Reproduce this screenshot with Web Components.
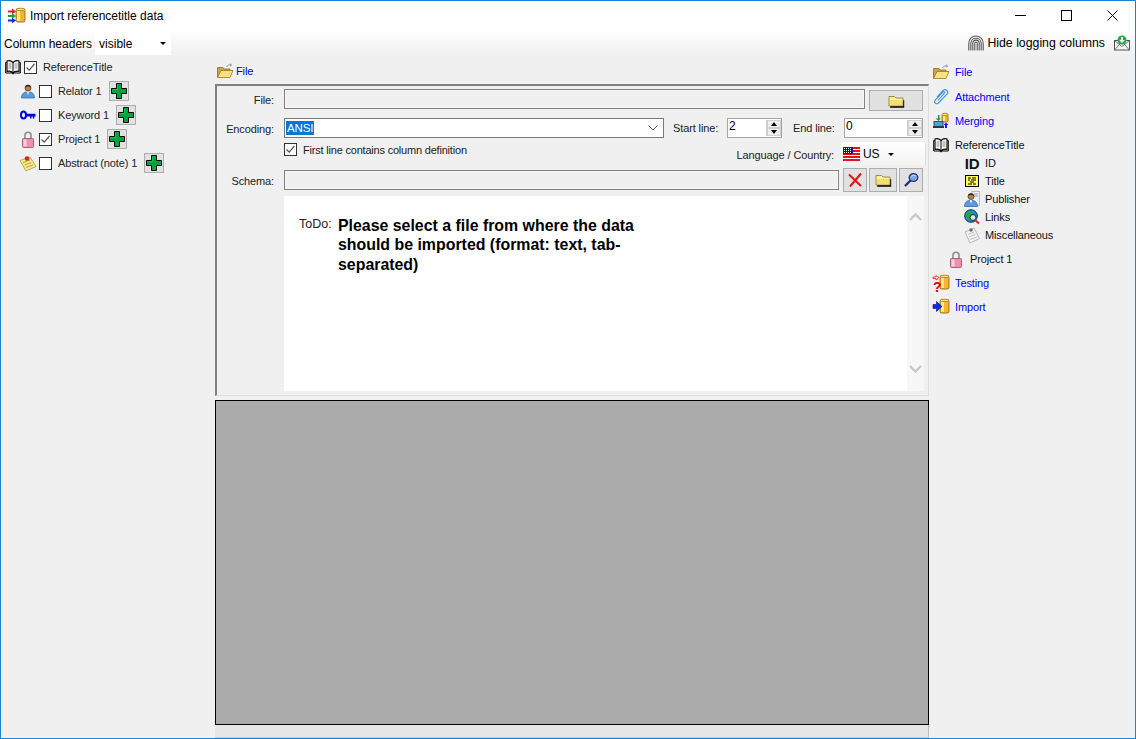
<!DOCTYPE html>
<html lang="en">
<head>
<meta charset="UTF-8">
<title>Import referencetitle data</title>
<style>
  html, body { margin: 0; height: 100%; overflow: hidden; }
  body { font: 12px "Liberation Sans", Arial, sans-serif; color: #000; background: #f0f0f0; }
</style>
</head>
<body>
<import-window>
  <span slot="title">Import referencetitle data</span>

  <tree-row slot="tree" icon="book" label="ReferenceTitle" checked root></tree-row>
  <tree-row slot="tree" icon="relator" label="Relator 1" add></tree-row>
  <tree-row slot="tree" icon="key" label="Keyword 1" add></tree-row>
  <tree-row slot="tree" icon="lock" label="Project 1" checked add></tree-row>
  <tree-row slot="tree" icon="note" label="Abstract (note) 1" add></tree-row>

  <file-panel slot="panel"></file-panel>

  <nav-item slot="nav" icon="folderopen" label="File" link h="24"></nav-item>
  <nav-item slot="nav" icon="clip" label="Attachment" link h="25"></nav-item>
  <nav-item slot="nav" icon="merge" label="Merging" link h="24"></nav-item>
  <nav-item slot="nav" icon="book" label="ReferenceTitle" h="18" mt="3"></nav-item>
  <nav-item slot="nav" icon="id" label="ID" indent="31" gap="5" h="18"></nav-item>
  <nav-item slot="nav" icon="title" label="Title" indent="31" gap="5" h="18"></nav-item>
  <nav-item slot="nav" icon="publisher" label="Publisher" indent="31" gap="5" h="18"></nav-item>
  <nav-item slot="nav" icon="links" label="Links" indent="31" gap="5" h="18"></nav-item>
  <nav-item slot="nav" icon="misc" label="Miscellaneous" indent="31" gap="5" h="18"></nav-item>
  <nav-item slot="nav" icon="lock" label="Project 1" indent="15" gap="6" h="18" mt="6"></nav-item>
  <nav-item slot="nav" icon="testing" label="Testing" link h="18" mt="6"></nav-item>
  <nav-item slot="nav" icon="import" label="Import" link h="18" mt="6"></nav-item>
</import-window>

<script>
  // little database cylinder used by a few icons
  const cyl = (x, y, w, h) => `
    <rect x="${x}" y="${y + 1}" width="${w}" height="${h - 2}" rx="1.5" fill="#f5b52e" stroke="#8a5a10" stroke-width=".8"/>
    <rect x="${x + 1}" y="${y + 2}" width="${Math.max(w / 3, 1.5)}" height="${h - 4}" fill="#ffe98a"/>
    <ellipse cx="${x + w / 2}" cy="${y + 1.4}" rx="${w / 2}" ry="1.2" fill="#ffe477" stroke="#8a5a10" stroke-width=".6"/>`;

  const person = `
    <circle cx="8" cy="5" r="3" fill="#b5804f" stroke="#4a2c12" stroke-width=".7"/>
    <path d="M5 4.500C5 1 11 1 11 4.500L9 3.500H7Z" fill="#33200f"/>
    <path d="M1.500 15C1.500 10.500 4.500 9 6.500 9L8 11 9.500 9C11.500 9 14.500 10.500 14.500 15Z" fill="#5b9be0" stroke="#2a5fa5" stroke-width=".7"/>
    <path d="M7 9.500L8 12 9 9.500Z" fill="#fff"/>`;

  const icons = {
    book: `<path d="M8 3.500C6 1.500 3.500 1.500 2 2V12.500C3.500 12 6 12 8 14 10 12 12.500 12 14 12.500V2C12.500 1.500 10 1.500 8 3.500Z" fill="#fff" stroke="#000" stroke-width="1.100"/>
      <path d="M2 3.500H.7V14H6.500L8 15 9.500 14H15.300V3.500H14M8 3.500V14" fill="none" stroke="#000" stroke-width="1"/>
      <path d="M3.500 5H6.500M3.500 7H6.500M3.500 9H6.500M9.500 5H12.500M9.500 7H12.500M9.500 9H12.500" stroke="#666" stroke-width=".8"/>`,
    relator: person,
    key: `<ellipse cx="3.500" cy="8" rx="2.500" ry="3.500" fill="none" stroke="#0000e0" stroke-width="2"/>
      <path d="M6 6.800H15.500V9.500H14.300V11.500H12.800V9.500H11.500V11.500H10V9.500H6Z" fill="#0000e0"/>`,
    lock: `<path d="M5 8V4C5 .3 11 .3 11 4V8" fill="none" stroke="#8c8c8c" stroke-width="1.600"/>
      <rect x="2.500" y="7.500" width="11" height="9" rx="1" fill="#ef8fb0" stroke="#a2466a" stroke-width=".8"/>
      <rect x="3.500" y="8.500" width="3" height="7" fill="#fbd0de"/>`,
    note: `<path d="M0 5.500L10 2 16 11.500 6 16Z" fill="#fbe98a" stroke="#a99a40" stroke-width=".8"/>
      <path d="M3 7.500L10 5M4.500 10L11.500 7.500M6 12.500L13 10" stroke="#9b8a35" stroke-width=".8"/>
      <circle cx="7" cy="3.500" r="2.300" fill="#d8232a"/>`,
    plus: `<path d="M5.500 .5H10.500V5.500H15.500V10.500H10.500V15.500H5.500V10.500H.5V5.500H5.500Z" fill="#00a33c" stroke="#000" stroke-width="1"/>
      <path d="M6.500 1.500V6.500H1.500" stroke="#00d060" fill="none" stroke-width="1"/>`,
    folderopen: `<path d="M.5 14.500V4.500H6L7 6H13V8" fill="#c9a24a" stroke="#8c6f2e" stroke-width=".8"/>
      <path d="M.5 14.500L4 7.500H16L13 14.500Z" fill="#ffdf80" stroke="#96782f" stroke-width=".8"/>
      <path d="M9.500 4C10.500 2 12.500 1.500 14.500 2L13.200 .8M14.500 2L13 3.200" fill="none" stroke="#8a8a8a" stroke-width=".9"/>`,
    folder: `<path d="M1 4.500H6.500L8 6H15V13.500H1Z" fill="#000" transform="translate(1.200 1.200)"/>
      <path d="M1 3.500H6.500L8 5H15V13H1Z" fill="#ffef9e" stroke="#827320" stroke-width=".8"/>
      <path d="M2 7H14V12H2Z" fill="#f4dd72"/>`,
    cross: `<path d="M2 2.500L14 14M14 1.500L3 14.500" stroke="#e3141c" stroke-width="2" fill="none"/>`,
    search: `<ellipse cx="10.500" cy="5.500" rx="4.300" ry="3.800" fill="#7ea6e0" stroke="#26307e" stroke-width="1.300"/>
      <path d="M7.500 8.500L2 14" stroke="#26307e" stroke-width="2.400"/>
      <path d="M8.500 4.500C9.500 3.300 11 3.200 12 3.600" stroke="#dfeaff" fill="none"/>`,
    clip: `<path d="M5 11.500L11.500 4.200C12.300 3.200 11 2 10 3L2.200 11C.3 13.200 3.300 16 5.500 14L14 5.200C16.200 2.600 12.800 -.8 10 1.500L4 8" fill="none" stroke="#3c97dc" stroke-width="1.100"/>`,
    merge: `${cyl(9, 0, 6, 10)}
      <path d="M5 2V5.500H2.500L5.500 8 8 5.500H6.500V2Z" fill="#1f9a3a"/>
      <rect x="1" y="8.500" width="9" height="5" fill="#4aa6d8" stroke="#22333f" stroke-width=".8"/>
      <rect x="0" y="13" width="11" height="2" fill="#333"/>
      <path d="M13 9.500L15.500 12H14V15H12V12H10.500Z" fill="#1a1ae0"/>`,
    title: `<rect x="1.500" y="2.500" width="13" height="11" fill="#ffff55" stroke="#000"/>
      <path d="M4 5H7M8 5H12M4 7H6M7 7H12M6 9H10M4 11H8M9 11H12" stroke="#000" stroke-width="1" fill="none"/>`,
    publisher: `<rect x="8" y="0.500" width="7.500" height="14" fill="#eef1f6" stroke="#9aa3b2" stroke-width=".7"/>
      <path d="M10 3H14M10 5H14" stroke="#7a88a0" stroke-width=".8"/>
      <g transform="translate(-1 .5)">${person}</g>`,
    links: `<circle cx="7" cy="7" r="6.300" fill="#1f8fd8" stroke="#052a66" stroke-width="1"/>
      <path d="M3 3.500L7 2.500 8 5 5.500 7 6.500 10.500 3.500 9.500 1.500 6.500ZM9.500 9L12.500 7.500 12 11 10 12.500Z" fill="#22a83c"/>
      <circle cx="9" cy="8.500" r="3" fill="#cfe7f7" stroke="#222" stroke-width="1"/>
      <path d="M11 11L15 14.500" stroke="#d8232a" stroke-width="2"/>`,
    misc: `<path d="M1 5L10 1 15.500 11.500 6 16Z" fill="#f3f3f3" stroke="#a8a8a8" stroke-width=".8"/>
      <path d="M4 7.500L10 5M5 10L11.500 7.500M6 12.500L13 10" stroke="#adadad" stroke-width=".8"/>
      <circle cx="7" cy="3" r="1.800" fill="#707070"/>`,
    testing: `${cyl(7, 0, 9, 15)}
      <text x="0" y="16.500" font-family="Liberation Sans, sans-serif" font-size="14" font-weight="700" fill="#e00000">?</text>
      <path d="M0 2H3V.5L6 2.700 3 5V3.500H0Z" fill="#fff" stroke="#e00000" stroke-width=".7"/>`,
    import: `${cyl(7, 0, 9, 15)}
      <path d="M0 5.500H3.500V2.500L9 7.500 3.500 12.500V9.500H0Z" fill="#1028e8" stroke="#0a0a70" stroke-width=".6"/>`,
    appicon: `${cyl(8, 1, 9, 15)}
      <path d="M0 3.500H4V1.500L8 4.500 4 7.500V5.500H0Z" fill="#e0202a"/>
      <path d="M0 8H4V6.200L8 9 4 11.800V10H0Z" fill="#14a03a"/>
      <path d="M0 12.500H4V10.700L8 13.500 4 16.300V14.500H0Z" fill="#1028e8"/>`,
    finger: `<g fill="none" stroke="#555" stroke-width="1.100">
      <path d="M.8 15.500V8.500C.8 -1.500 15.200 -1.500 15.200 8.500V15.500"/>
      <path d="M2.800 15.500V8.500C2.800 1.500 13.200 1.500 13.200 8.500V15.500"/>
      <path d="M4.800 15.500V8.500C4.800 4 11.200 4 11.200 8.500V15.500"/>
      <path d="M6.800 15.500V8.500C6.800 6.500 9.200 6.500 9.200 8.500V15.500"/></g>`,
    mail: `<rect x=".5" y="5.500" width="15" height="9.500" fill="#f4f4f4" stroke="#555"/>
      <path d="M.5 15L6 9M15.500 15L10 9M.5 5.500L8 11.500 15.500 5.500" fill="none" stroke="#555" stroke-width=".8"/>
      <circle cx="8" cy="5" r="4.500" fill="#27a84a"/>
      <path d="M7 2H9V5H10.800L8 8 5.200 5H7Z" fill="#fff"/>`
  };

  class AppIcon extends HTMLElement {
    connectedCallback() {
      const name = this.getAttribute('name');
      const size = this.getAttribute('size') || 16;
      const w = this.getAttribute('w') || size;
      const vb = name === 'appicon' ? '0 0 18 17' : '0 0 16 16';
      let inner = `<svg width="${w}" height="${size}" viewBox="${vb}">${icons[name] || ''}</svg>`;
      if (name === 'id') inner = '<b>ID</b>';
      this.attachShadow({ mode: 'open' }).innerHTML = `
        <style>
          :host { display: inline-flex; align-items: center; justify-content: center; width: ${w}px; height: ${size}px; flex: none; }
          svg { display: block; overflow: visible; }
          b { font: 700 15px "Liberation Sans", sans-serif; letter-spacing: -.3px; }
        </style>${inner}`;
    }
  }
  customElements.define('app-icon', AppIcon);

  class CheckBox extends HTMLElement {
    connectedCallback() {
      const on = this.hasAttribute('checked');
      this.attachShadow({ mode: 'open' }).innerHTML = `
        <style>
          :host { display: block; width: 13px; height: 13px; flex: none; box-sizing: border-box; border: 1px solid #333; background: #fff; }
          svg { display: block; }
        </style>
        ${on ? '<svg width="11" height="11" viewBox="0 0 11 11"><path d="M1.500 5.500L4.200 8.200 9.500 2" fill="none" stroke="#555" stroke-width="1.200"/></svg>' : ''}`;
    }
  }
  customElements.define('check-box', CheckBox);

  // grey flat toolbar button with an icon in it
  class IconButton extends HTMLElement {
    connectedCallback() {
      const w = this.getAttribute('w') || 20;
      const h = this.getAttribute('h') || 20;
      const iw = this.getAttribute('iw') || 16;
      this.attachShadow({ mode: 'open' }).innerHTML = `
        <style>
          :host { display: flex; align-items: center; justify-content: center; box-sizing: border-box; width: ${w}px; height: ${h}px; flex: none; background: #e1e1e1; border: 1px solid #adadad; }
        </style>
        <app-icon name="${this.getAttribute('icon')}" size="16" w="${iw}"></app-icon>`;
    }
  }
  customElements.define('icon-button', IconButton);

  class TreeRow extends HTMLElement {
    connectedCallback() {
      const root = this.hasAttribute('root');
      this.attachShadow({ mode: 'open' }).innerHTML = `
        <style>
          :host { display: flex; align-items: center; height: 24px; padding-left: ${root ? 4 : 19}px; font-size: 11px; letter-spacing: -.12px; }
          app-icon { margin-right: 3px; }
          check-box { margin-right: 6px; }
          span { margin-right: 7px; white-space: nowrap; color: #222; }
        </style>
        <app-icon name="${this.getAttribute('icon')}"></app-icon>
        <check-box ${this.hasAttribute('checked') ? 'checked' : ''}></check-box>
        <span>${this.getAttribute('label')}</span>
        ${this.hasAttribute('add') ? '<icon-button icon="plus"></icon-button>' : ''}`;
    }
  }
  customElements.define('tree-row', TreeRow);

  class NavItem extends HTMLElement {
    connectedCallback() {
      const indent = this.getAttribute('indent') || 0;
      const gap = this.getAttribute('gap') || 6;
      const color = this.hasAttribute('link') ? '#0000ff' : '#111';
      this.attachShadow({ mode: 'open' }).innerHTML = `
        <style>
          :host { display: flex; align-items: center; height: ${this.getAttribute('h') || 24}px; margin-top: ${this.getAttribute('mt') || 0}px; padding-left: ${4 + Number(indent)}px; color: ${color}; white-space: nowrap; font-size: 11px; letter-spacing: -.12px; }
          app-icon { margin-right: ${gap}px; }
        </style>
        <app-icon name="${this.getAttribute('icon')}"></app-icon><span>${this.getAttribute('label')}</span>`;
    }
  }
  customElements.define('nav-item', NavItem);

  class SpinBox extends HTMLElement {
    connectedCallback() {
      const w = this.getAttribute('w');
      this.attachShadow({ mode: 'open' }).innerHTML = `
        <style>
          :host { display: flex; box-sizing: border-box; width: ${w}px; height: 20px; flex: none; background: #fff; border: 1px solid #a5a5a5; }
          .val { flex: 1; padding: 0 0 0 1px; font-size: 12px; line-height: 15px; letter-spacing: 0; }
          .btns { width: 14px; display: flex; flex-direction: column; border-left: 1px solid #ccc; margin: 1px 0; }
          .btns div { flex: 1; display: flex; align-items: center; justify-content: center; background: #efefef; border: 1px solid #d0d0d0; }
          i { width: 0; height: 0; border-left: 3.500px solid transparent; border-right: 3.500px solid transparent; }
          .up { border-bottom: 4px solid #000; }
          .down { border-top: 4px solid #000; }
        </style>
        <div class="val">${this.getAttribute('value')}</div>
        <div class="btns"><div><i class="up"></i></div><div><i class="down"></i></div></div>`;
    }
  }
  customElements.define('spin-box', SpinBox);

  class FilePanel extends HTMLElement {
    connectedCallback() {
      this.attachShadow({ mode: 'open' }).innerHTML = `
        <style>
          :host { display: block; box-sizing: border-box; height: 312px; background: #f0f0f0; border-top: 2px solid #808080; border-left: 2px solid #808080; border-right: 1px solid #ddd; border-bottom: 1px solid #ddd; padding: 3px 5px 0 0; font-size: 11px; letter-spacing: -.12px; }
          .row { display: flex; align-items: center; }
          .lbl { width: 57px; flex: none; margin-right: 10px; padding-top: 1px; text-align: right; color: #222; }
          .field { box-sizing: border-box; height: 20px; flex: 1; background: #f0f0f0; border: 1px solid #808080; border-right-color: #888; box-shadow: inset 0 0 0 1px #f6f6f6; }
          .combo { box-sizing: border-box; width: 380px; height: 20px; flex: none; background: #fff; border: 1px solid #7a7a7a; display: flex; align-items: center; justify-content: space-between; padding: 0 5px 0 1px; }
          .combo span { background: #0078d7; color: #fff; line-height: 14px; padding: 0 1px; font-size: 11.5px; }
          .start { width: 54px; flex: none; margin-left: 9px; white-space: nowrap; color: #222; }
          .end { width: 51px; flex: none; margin-left: 11px; white-space: nowrap; color: #222; }
          .check { display: flex; justify-content: space-between; align-items: flex-start; height: 30px; padding-top: 5px; box-sizing: border-box; margin-left: 67px; }
          .check .first { display: flex; align-items: center; gap: 6px; color: #222; letter-spacing: -.2px; }
          .lang { display: flex; align-items: flex-start; margin: -1px -3px 0 0; }
          .lang > span { margin: 7px 7px 0 0; color: #222; }
          .flagbox { width: 85px; height: 23px; box-sizing: border-box; display: flex; align-items: center; padding: 1px 0 0 2px; gap: 3px; background: linear-gradient(#fff, #f3f3f3); border-right: 1px solid #ddd; border-radius: 3px 3px 0 0; font-size: 12px; }
          .caret { width: 0; height: 0; border-left: 3px solid transparent; border-right: 3px solid transparent; border-top: 3px solid #000; margin-left: 6px; }
          .todo { display: flex; height: 195px; margin: 4px -1px 0 67px; background: #fff; }
          .todo .name { width: 54px; box-sizing: border-box; padding: 21px 5px 0 15px; color: #222; font-size: 12.5px; letter-spacing: 0; }
          .todo .msg { width: 300px; padding-top: 20px; font: 700 15.900px/19.400px "Liberation Sans", sans-serif; letter-spacing: 0; }
          .todo .gap { flex: 1; }
          .scroll { width: 17px; background: #f7f7f7; display: flex; flex-direction: column; justify-content: space-between; align-items: center; padding: 17px 0 18px; box-sizing: border-box; }
          .scroll svg { display: block; }
        </style>
        <div class="row" style="align-items:flex-start">
          <div class="lbl" style="padding-top:5px">File:</div>
          <div class="field"></div>
          <icon-button icon="folder" w="54" h="21" style="margin:1px 0 0 4px"></icon-button>
        </div>
        <div class="row" style="margin-top:7px">
          <div class="lbl">Encoding:</div>
          <div class="combo"><span>ANSI</span>
            <svg width="10" height="6" viewBox="0 0 10 6"><path d="M.5 .5L5 5 9.500 .5" fill="none" stroke="#555"/></svg></div>
          <div class="start">Start line:</div>
          <spin-box w="55" value="2"></spin-box>
          <div class="end">End line:</div>
          <spin-box w="79" value="0"></spin-box>
        </div>
        <div class="check">
          <div class="first"><check-box checked></check-box><span>First line contains column definition</span></div>
          <div class="lang"><span>Language / Country:</span>
            <div class="flagbox">
              <svg width="17" height="14" viewBox="0 0 17 14">
                <rect width="17" height="14" fill="#e8101c"/>
                <path d="M0 2.500H17M0 5.500H17M0 8.500H17M0 11.500H17" stroke="#fff"/>
                <rect width="10" height="7" fill="#1414b4"/>
                <path d="M1 1.500H9M1 3.500H9M1 5.500H9" stroke="#fff" stroke-dasharray="1 1"/>
              </svg>
              <span>US</span><i class="caret"></i>
            </div>
          </div>
        </div>
        <div class="row">
          <div class="lbl">Schema:</div>
          <div class="field"></div>
          <icon-button icon="cross" w="24" h="24" style="margin:0 2px 0 4px"></icon-button>
          <icon-button icon="folder" w="28" h="24" style="margin-right:2px"></icon-button>
          <icon-button icon="search" w="24" h="24"></icon-button>
        </div>
        <div class="todo">
          <div class="name">ToDo:</div>
          <div class="msg">Please select a file from where the data should be imported (format: text, tab-separated)</div>
          <div class="gap"></div>
          <div class="scroll">
            <svg width="13" height="8" viewBox="0 0 13 8"><path d="M1 7L6.500 1.500 12 7" fill="none" stroke="#c8c8c8" stroke-width="2.400"/></svg>
            <svg width="13" height="8" viewBox="0 0 13 8"><path d="M1 1L6.500 6.500 12 1" fill="none" stroke="#c8c8c8" stroke-width="2.400"/></svg>
          </div>
        </div>`;
    }
  }
  customElements.define('file-panel', FilePanel);

  class ImportWindow extends HTMLElement {
    constructor() {
      super();
      this.attachShadow({ mode: 'open' }).innerHTML = `
        <style>
          :host { display: grid; grid-template-rows: 29px 25px 1fr; box-sizing: border-box; width: 1136px; height: 739px; border: 1px solid #1883d7; background: #f0f0f0; overflow: hidden; }
          .titlebar { display: flex; align-items: center; background: #fff; padding-left: 7px; }
          .titlebar .cap { margin-left: 4px; flex: 1; font-size: 12px; padding-top: 1px; }
          .winbtn { width: 46px; height: 29px; display: flex; align-items: center; justify-content: center; }
          .toolbar { display: flex; align-items: stretch; background: linear-gradient(#fff, #f0f0f0); padding: 2px 5px 0 3px; }
          .toolbar .lab { align-self: center; margin-right: 3px; }
          .picker { width: 76px; background: #fff; display: flex; align-items: center; justify-content: space-between; padding: 0 5px 0 4px; box-sizing: border-box; }
          .picker i { width: 0; height: 0; border-left: 3px solid transparent; border-right: 3px solid transparent; border-top: 3px solid #000; }
          .spacer { flex: 1; }
          .logs { display: flex; align-items: center; gap: 3px; margin-top: -2px; font-size: 12.300px; }
          .logs app-icon:last-child { margin-left: 6px; }
          .main { display: grid; grid-template-columns: 214px 714px 1fr; min-height: 0; }
          .center { display: flex; flex-direction: column; min-height: 0; }
          .head { display: flex; align-items: center; height: 29px; padding: 3px 0 0 2px; box-sizing: border-box; color: #0000ff; gap: 3px; font-size: 11px; letter-spacing: -.12px; }
          .gap { height: 4px; flex: none; }
          .grey { flex: 1; background: #ababab; border: 1px solid #000; }
          .track { height: 13px; flex: none; background: #e6e6e6; border-right: 1px solid #bbb; border-bottom: 1px solid #ccc; box-sizing: border-box; }
          .nav { padding-top: 5px; }
        </style>
        <div class="titlebar">
          <app-icon name="appicon" w="18" size="17"></app-icon>
          <div class="cap"><slot name="title"></slot></div>
          <div class="winbtn"><svg width="11" height="11"><path d="M0 5.500H11" stroke="#000"/></svg></div>
          <div class="winbtn"><svg width="11" height="11"><rect x=".5" y=".5" width="10" height="10" fill="none" stroke="#000"/></svg></div>
          <div class="winbtn"><svg width="11" height="11"><path d="M.5 .5L10.500 10.500M10.500 .5L.5 10.500" stroke="#000"/></svg></div>
        </div>
        <div class="toolbar">
          <div class="lab">Column headers</div>
          <div class="picker"><span>visible</span><i></i></div>
          <div class="spacer"></div>
          <div class="logs">
            <app-icon name="finger"></app-icon><span>Hide logging columns</span><app-icon name="mail"></app-icon>
          </div>
        </div>
        <div class="main">
          <div class="tree"><slot name="tree"></slot></div>
          <div class="center">
            <div class="head"><app-icon name="folderopen"></app-icon><span>File</span></div>
            <slot name="panel"></slot>
            <div class="gap"></div>
            <div class="grey"></div>
            <div class="track"></div>
          </div>
          <div class="nav"><slot name="nav"></slot></div>
        </div>`;
    }
  }
  customElements.define('import-window', ImportWindow);
</script>
</body>
</html>
